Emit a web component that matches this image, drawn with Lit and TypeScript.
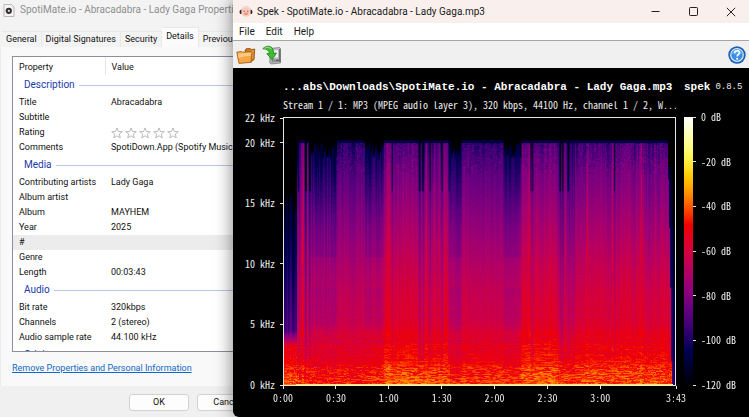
import { LitElement, html, css, svg } from "lit";
import { customElement } from "lit/decorators.js";

/* ---------- shared palette: level 0..1 to RGB ---------- */
function heat(level: number): [number, number, number] {
  const l = Math.max(0, Math.min(1, level));
  const q = Math.PI / 2;
  let r = 0;
  let g = 0;
  let b = 0;
  if (l >= 0.13 && l < 0.73) r = Math.sin(((l - 0.13) / 0.6) * q);
  else if (l >= 0.73) r = 1;
  if (l >= 0.6 && l < 0.91) g = Math.sin(((l - 0.6) / 0.31) * q);
  else if (l >= 0.91) g = 1;
  if (l < 0.6) b = 0.5 * Math.sin((l / 0.6) * Math.PI);
  else if (l >= 0.78) b = (l - 0.78) / 0.22;
  return [r * 255, g * 255, b * 255];
}

function random(seed: number) {
  let s = seed;
  return () => {
    s = (s * 1664525 + 1013904223) >>> 0;
    return s / 4294967296;
  };
}

/* level of a loud passage at a frequency in kHz */
const CURVE: [number, number][] = [
  [0, 0.655], [0.6, 0.64], [1.4, 0.625], [2, 0.585], [3, 0.57], [4, 0.545], [5, 0.515],
  [8, 0.48], [10, 0.445], [12, 0.405], [15, 0.345], [17, 0.305], [19, 0.265], [20, 0.24], [22.05, 0.2],
];
function base(f: number) {
  for (let i = 1; i < CURVE.length; i++) {
    if (f <= CURVE[i][0]) {
      const [f0, v0] = CURVE[i - 1];
      const [f1, v1] = CURVE[i];
      return v0 + ((v1 - v0) * (f - f0)) / (f1 - f0);
    }
  }
  return 0.2;
}

type Part = { to: number; kind: "intro" | "full" | "dim" | "slit" | "end"; gain: number };
const PARTS: Part[] = [
  { to: 13, kind: "intro", gain: 0 },
  { to: 27, kind: "slit", gain: -0.03 },
  { to: 53, kind: "dim", gain: -0.035 },
  { to: 81, kind: "full", gain: -0.03 },
  { to: 100, kind: "dim", gain: -0.015 },
  { to: 135, kind: "full", gain: 0.02 },
  { to: 166, kind: "slit", gain: 0.01 },
  { to: 178, kind: "dim", gain: -0.035 },
  { to: 220, kind: "full", gain: -0.012 },
  { to: 238, kind: "dim", gain: -0.02 },
  { to: 275, kind: "full", gain: 0.02 },
  { to: 294, kind: "slit", gain: 0 },
  { to: 385, kind: "full", gain: 0.008 },
  { to: 392, kind: "end", gain: 0 },
];
/* columns where a beat reaches the full height */
const BEATS = [17, 18, 19, 23, 103, 104, 105, 106, 142, 143, 150, 155, 156, 161, 244, 245, 246, 281, 282, 292, 303, 304, 328, 329, 357, 358];
const GAPS = [14, 21, 22, 25, 26, 108, 135, 136, 138, 139, 146, 158, 165, 247, 249, 276, 277, 279, 284, 285, 331];

@customElement("spek-plot")
export class SpekPlot extends LitElement {
  static styles = css`
    :host { display: block; min-width: 0; min-height: 0; }
    .canvas { display: block; width: 100%; height: 100%; }
  `;

  render() {
    return html`<canvas class="canvas" width="392" height="266" role="img" aria-label="Spectrogram"></canvas>`;
  }

  firstUpdated() {
    const canvas = this.renderRoot.querySelector("canvas") as HTMLCanvasElement;
    const ctx = canvas.getContext("2d");
    if (!ctx) return;
    const w = canvas.width;
    const h = canvas.height;
    const img = ctx.createImageData(w, h);
    const rnd = random(77);
    const rows = Array.from({ length: h }, () => rnd() - 0.5);
    const streak = new Array(h).fill(0);
    let wide = 0;
    for (let x = 0; x < w; x++) {
      const part = PARTS.find((p) => x < p.to) ?? PARTS[PARTS.length - 1];
      if (rnd() < 0.3) wide = rnd() - 0.5;
      const col = (rnd() - 0.5) * 0.7 + wide * 0.5;
      const depth = rnd();
      const closed = rnd() < 0.4;
      const beat = BEATS.includes(x);
      const gap = GAPS.includes(x);
      const stripeEnd = 4 + rnd() * 8;
      for (let y = 0; y < h; y++) {
        const f = (1 - (y + 0.5) / h) * 22.05;
        const fine = rnd() - 0.5;
        if (rnd() < 0.4) streak[y] = rnd() - 0.5;
        let v = base(f) + part.gain;
        v += col * (f > stripeEnd ? 0.075 : f > 4 ? 0.045 : 0.02);
        v += fine * (f > 4 ? 0.03 : 0.03);
        v += rows[y] * (f < 6 ? 0.022 : 0.008);
        if (f < 4) v += streak[y] * (f < 1.6 ? 0.12 : 0.07);
        let top = 20;
        if (part.kind === "intro") {
          const fade = Math.max(0, Math.min(1, (4.5 - f) / 1.3));
          const low = 0.25 + col * 0.1 * (1 - fade) - Math.max(0, f - 4.5) * 0.018 - (x > 8 ? 0.04 : 0) * (1 - fade);
          if (f > 3.2) v = low * (1 - fade) + v * fade;
          top = 16 - depth * 2;
        } else if (part.kind === "dim") {
          const patch = f > 10.5 ? 0.045 : f > 8 ? 0.02 : f > 4 + depth ? 0.04 : 0.005;
          v -= patch;
          if (f > 13) v -= (f - 13) * (0.002 + depth * 0.014);
          top = 18.6 + depth * 1.4;
        } else if (part.kind === "slit") {
          v += col * (f > 4 ? 0.05 : 0.02);
          if (closed && !beat) {
            v -= f > 4 ? 0.03 : 0.01;
            if (f > 16) v -= (f - 16) * 0.04 * depth;
          }
        } else if (part.kind === "full") {
          if (f > 17.5) v += fine * 0.07 - (closed ? 0.012 * (f - 17.5) * (1 + depth) : 0);
        } else {
          const edge = 385 + (f < 17 ? 1 : 0) + (f < 13 ? 1 : 0) + (f < 8 ? 1 : 0) + (f < 2 ? 1 : 0);
          if (x >= edge) v = f > 18 ? 0 : 0.22 - f * 0.006 - (x - edge) * 0.03;
        }
        if (beat) v += f > 10 ? 0.065 : f > 4 ? 0.03 : 0.01;
        if (gap && f > 2) v -= f > 16 ? 0.2 : 0.07;
        if (f > top) v = part.kind === "intro" ? 0 : f > top + 0.2 ? 0 : Math.min(v, 0.1);
        if (y === h - 1 && x < 390) v = x < 12 ? 0.7 : 0.84;
        const [r, g, b] = heat(v);
        const i = (y * w + x) * 4;
        img.data[i] = r;
        img.data[i + 1] = g;
        img.data[i + 2] = b;
        img.data[i + 3] = 255;
      }
    }
    ctx.putImageData(img, 0, 0);
  }
}

@customElement("spek-legend")
export class SpekLegend extends LitElement {
  static styles = css`
    :host { display: block; }
    .canvas { display: block; width: 100%; height: 100%; }
  `;

  render() {
    return html`<canvas class="canvas" width="1" height="267" role="img" aria-label="Level scale"></canvas>`;
  }

  firstUpdated() {
    const canvas = this.renderRoot.querySelector("canvas") as HTMLCanvasElement;
    const ctx = canvas.getContext("2d");
    if (!ctx) return;
    for (let y = 0; y < canvas.height; y++) {
      const [r, g, b] = heat(1 - y / canvas.height);
      ctx.fillStyle = `rgb(${r},${g},${b})`;
      ctx.fillRect(0, y, 1, 1);
    }
  }
}

/* ---------- icons ---------- */
const discIcon = svg`<svg width="12" height="13" viewBox="0 0 12 13" aria-hidden="true">
  <path d="M1 .5h7.500L11 3v9.500H1z" fill="#f4f4f4" stroke="#b9b9b9"/>
  <circle cx="5.800" cy="6.800" r="3.100" fill="#332c2c"/>
  <circle cx="5.800" cy="6.800" r="1.100" fill="#fff"/><circle cx="5.800" cy="6.800" r=".4" fill="#544"/>
</svg>`;
const faceIcon = svg`<svg width="14" height="12" viewBox="0 0 14 12" aria-hidden="true">
  <path d="M1.600 5.500C2.200 2 4.300.6 7 .6s4.800 1.400 5.400 4.900" fill="none" stroke="#dccbc6" stroke-width=".8"/>
  <circle cx="7" cy="6" r="4.800" fill="#fbc9ba"/>
  <path d="M2.400 3.800C.8 4 .4 5.200.6 6.400s1.100 1.700 1.800 1.500zM11.600 3.800c1.600.2 2 1.400 1.800 2.600s-1.100 1.700-1.800 1.500z" fill="#2b2020"/>
  <circle cx="5.200" cy="5.200" r=".6" fill="#7d4236"/><circle cx="8.800" cy="5.200" r=".6" fill="#7d4236"/>
  <ellipse cx="7" cy="7.800" rx="1.900" ry="1.200" fill="#ee8a7a"/>
</svg>`;
const folderIcon = svg`<svg width="20" height="19" viewBox="0 0 20 19" aria-hidden="true">
  <path d="M9 4.500 10 2.800l4.300-.3.9 1L18.700 3l-.6 10.500-3.500 3z" fill="#c97a1d" stroke="#8d4c0c" stroke-width=".8"/>
  <path d="M14.500 4.500 17.800 4l-.6 8.500-2 1z" fill="#e49a45"/>
  <path d="M.8 6.200 5.500 5.500l1.200.7 8.600-.6.7.9-1 9.800L3 17.400z" fill="#f6a548" stroke="#a85d12" stroke-width=".9"/>
  <path d="M2 7.500 15 6.700l-.3 3.300C10 9.500 6 11 2.600 12.200z" fill="#fcc983"/>
</svg>`;
const saveIcon = svg`<svg width="20" height="20" viewBox="0 0 20 20" aria-hidden="true">
  <path d="M8 3.500 17.500 2.500l1 1V18l-9.500 1-1.200-1z" fill="#b9bcbe" stroke="#7b7e80" stroke-width=".8"/>
  <path d="M10 5.500 16 5v7.500L10 13z" fill="#eceeef"/><path d="M9.500 14.500l7.500-.8v3l-7.500.8z" fill="#8e9294"/>
  <path d="M17.800 4v13" stroke="#4a4d4e"/><path d="M14.500 15.500h2" stroke="#4a4d4e"/>
  <path d="M.8 3.800C3.500.5 8.500.3 10.500 3.500c.8 1.400.9 3 .9 4.800l3-.2-4.200 6.700-5.400-6.200 2.700-.1c-.3-2.800-2.500-4.700-6.700-4.700z" fill="#41bd31" stroke="#1b7c15" stroke-width=".8"/>
  <path d="M2.500 3.200C5 1.700 8.200 2 9.400 4.200" fill="none" stroke="#9be887"/>
</svg>`;
const helpIcon = svg`<svg width="18" height="18" viewBox="0 0 18 18" aria-hidden="true">
  <circle cx="9" cy="9" r="8.700" fill="#1c5fb4"/><circle cx="9" cy="9" r="6.300" fill="#3b8ee6" stroke="#d9ebfb" stroke-width="1.200"/>
  <path d="M3.500 7.500a5.700 5.700 0 0 1 11 0c-3 1.500-8 1.500-11 0z" fill="#5ba5ef"/>
  <path d="M6.600 7.200c0-3.400 4.900-3.200 4.900-.4 0 1.900-2.400 1.800-2.400 3.700" fill="none" stroke="#fff" stroke-width="1.600"/>
  <circle cx="9.100" cy="12.700" r="1.050" fill="#fff"/>
</svg>`;
const star = svg`<svg width="12" height="12" viewBox="0 0 12 12" aria-hidden="true">
  <path d="M6 .9 7.400 4.500l3.900.2-3 2.400 1 3.800L6 8.800l-3.300 2.100 1-3.800-3-2.400 3.900-.2z" fill="#fff" stroke="#a9a9a9" stroke-width=".8"/>
</svg>`;

/* ---------- file properties dialog ---------- */
const SECTIONS = [
  { name: "Description", rows: [["Title", "Abracadabra"], ["Subtitle", ""], ["Rating", "*"], ["Comments", "SpotiDown.App (Spotify Music"]] },
  { name: "Media", rows: [["Contributing artists", "Lady Gaga"], ["Album artist", ""], ["Album", "MAYHEM"], ["Year", "2025"], ["#", ""], ["Genre", ""], ["Length", "00:03:43"]] },
  { name: "Audio", rows: [["Bit rate", "320kbps"], ["Channels", "2 (stereo)"], ["Audio sample rate", "44.100 kHz"]] },
  { name: "Origin", rows: [] as string[][] },
];

@customElement("properties-dialog")
export class PropertiesDialog extends LitElement {
  static styles = css`
    :host { display: flex; flex-direction: column; height: 100%; background: #f3f3f3; color: #111;
      font: 9px/15px Roboto, Arial, sans-serif; white-space: nowrap; overflow: hidden; }
    button { font: inherit; color: inherit; }
    .title { display: flex; align-items: center; gap: 5px; height: 20px; padding: 0 3px; color: #8f8f8f;
      font: 10px/20px Roboto, sans-serif; }
    .tabs { display: flex; align-items: flex-end; height: 27px; padding-left: 2px; }
    .tab { height: 16px; padding: 0 4px; border: 1px solid #e8e8e8; border-width: 1px 1px 0 0; background: #f3f3f3; line-height: 15px; }
    .tab.on { height: 20px; background: #fbfbfb; padding-bottom: 3px; }
    .page { flex: 1; min-height: 0; display: flex; flex-direction: column; padding: 9px 0 10px 11px;
      background: #f9f9f9; border-left: 1px solid #ececec; }
    .list { flex: 1; min-height: 0; overflow: hidden; background: #fff; border: 1px solid #8b8f96; border-right: 0; }
    .table { width: 100%; table-layout: fixed; border-collapse: collapse; }
    .name { width: 92px; }
    th, td { padding: 0 0 0 6px; height: 15px; text-align: left; font-weight: 400; }
    .head th { height: 18px; padding-top: 2px; box-sizing: border-box; }
    .head .sep { border-right: 1px solid #e5e5e5; }
    .section { height: 20px; padding-left: 11px; color: #1a3aa8; font: 10px/20px Roboto, sans-serif; }
    .rule { display: flex; align-items: center; gap: 4px; }
    .rule::after { content: ""; flex: 1; height: 1px; background: #b9c8ea; }
    .picked { background: #ececec; }
    .stars { display: flex; gap: 2px; }
    .star { display: block; width: 12px; height: 12px; padding: 0; border: 0; background: none; }
    .link { align-self: flex-start; margin-top: 9px; color: #0f68c8; }
    .foot { display: flex; gap: 8px; padding: 8px 0 6px 129px; background: #f0f0f0; }
    .push { flex: none; width: 60px; height: 17px; padding: 0; border: 1px solid #d2d2d2; border-radius: 3px; background: #fdfdfd; line-height: 15px; }
  `;

  value(v: string) {
    if (v !== "*") return v;
    return html`<div class="stars">
      ${[1, 2, 3, 4, 5].map((n) => html`<button class="star" aria-label="${n} stars">${star}</button>`)}
    </div>`;
  }

  render() {
    return html`
      <header class="title">${discIcon}<span>SpotiMate.io - Abracadabra - Lady Gaga Properties</span></header>
      <div class="tabs" role="tablist">
        ${["General", "Digital Signatures", "Security", "Details", "Previous Versions"].map(
          (t) => html`<button role="tab" class="tab ${t === "Details" ? "on" : ""}" aria-selected=${t === "Details"}>${t}</button>`
        )}
      </div>
      <div class="page">
        <div class="list">
          <table class="table">
            <colgroup><col class="name" /><col /></colgroup>
            <thead><tr class="head"><th class="sep">Property</th><th>Value</th></tr></thead>
            ${SECTIONS.map(
              (s) => html`<tbody>
                <tr><th class="section" colspan="2"><div class="rule">${s.name}</div></th></tr>
                ${s.rows.map(([k, v]) => html`<tr class=${k === "#" ? "picked" : ""}><th scope="row">${k}</th><td>${this.value(v)}</td></tr>`)}
              </tbody>`
            )}
          </table>
        </div>
        <a class="link" href="#remove">Remove Properties and Personal Information</a>
      </div>
      <footer class="foot">
        <button class="push">OK</button><button class="push">Cancel</button>
      </footer>
    `;
  }
}

/* ---------- spectrum analyser window ---------- */
const FREQS: [string, number][] = [["22 kHz", 2.05], ["20 kHz", 5], ["15 kHz", 5], ["10 kHz", 5], ["5 kHz", 5], ["0 kHz", 0]];
const TIMES: [string, number][] = [["0:00", 30], ["0:30", 30], ["1:00", 30], ["1:30", 30], ["2:00", 30], ["2:30", 30], ["3:00", 43], ["3:43", 0]];
const LEVELS: [string, number][] = [["0 dB", 1], ["-20 dB", 1], ["-40 dB", 1], ["-60 dB", 1], ["-80 dB", 1], ["-100 dB", 1], ["-120 dB", 0]];

@customElement("spek-window")
export class SpekWindow extends LitElement {
  static styles = css`
    :host { display: flex; flex-direction: column; overflow: hidden; background: #000; color: #1a1a1a;
      font: 10px/16px Roboto, sans-serif; white-space: nowrap; }
    button { font: inherit; color: inherit; border: 0; padding: 0; background: none; }
    .bar { display: flex; align-items: center; height: 23px; padding-left: 6px; background: #f9f0ee; }
    .caption { flex: 1; min-width: 0; overflow: hidden; padding-left: 4px; }
    .ctl { display: flex; align-items: center; justify-content: center; width: 38px; height: 20px; }
    .ctl.last { margin-right: -1px; }
    .menu { display: flex; gap: 11px; height: 17px; padding-left: 6px; background: #fff; border-bottom: 1px solid #a5a5a5; }
    .tools { display: flex; align-items: center; gap: 6px; height: 26px; padding: 1px 3px 0; background: #f0f0f0; }
    .tool { display: flex; }
    .grow { flex: 1; }
    .view { flex: 1; min-height: 0; display: grid; grid-template: 16px 16px minmax(0, 1fr) 29px / 50px minmax(0, 1fr) 73px;
      row-gap: 2px; padding-top: 11px; color: #ececec; font: 10px/10px "Noto Sans Mono CJK SC", "Liberation Mono", monospace; }
    .file { grid-area: 1 / 2; overflow: hidden; font: bold 11px/16px "Liberation Mono", monospace; color: #fff; }
    .app { grid-area: 1 / 3; display: flex; gap: 5px; align-items: center; padding-left: 8px; }
    .app-name { font: bold 11px/16px "Liberation Mono", monospace; color: #fff; }
    .version { font: 9px/16px "Liberation Mono", monospace; }
    .stream { grid-area: 2 / 2; overflow: hidden; line-height: 16px; }
    .freqs { grid-area: 3 / 1; display: flex; flex-direction: column; padding: 3px 0 1px; }
    .frame { grid-area: 3 / 2; margin-top: 2px; border: 1px solid #e6e6e6; }
    .times { grid-area: 4 / 2; display: flex; margin-top: -2px; }
    .levels { grid-area: 3 / 3; display: flex; margin-top: 2px; padding-left: 8px; }
    .legend { width: 9px; }
    .scale { display: flex; flex-direction: column; padding-bottom: 1px; }
    .step { flex-basis: 0; min-width: 0; min-height: 0; }
    .side { display: flex; align-items: center; height: 0; gap: 5px; }
    .side.right { justify-content: flex-end; }
    .dash { width: 3px; height: 1px; background: #e6e6e6; }
    .under { display: flex; flex-direction: column; align-items: center; width: 0; gap: 4px; }
    .tick { width: 1px; height: 3px; flex: none; background: #e6e6e6; }
  `;

  render() {
    return html`
      <header class="bar">
        ${faceIcon}<span class="caption">Spek - SpotiMate.io - Abracadabra - Lady Gaga.mp3</span>
        <button class="ctl" aria-label="Minimize"><svg width="9" height="9" viewBox="0 0 9 9"><path d="M.5 4.500h8" stroke="#222"/></svg></button>
        <button class="ctl" aria-label="Maximize"><svg width="9" height="9" viewBox="0 0 9 9"><rect x=".5" y=".5" width="8" height="8" rx=".8" fill="none" stroke="#222"/></svg></button>
        <button class="ctl last" aria-label="Close"><svg width="10" height="10" viewBox="0 0 10 10"><path d="M.8.8l8.400 8.400M9.200.8.8 9.200" stroke="#222"/></svg></button>
      </header>
      <nav class="menu"><button>File</button><button>Edit</button><button>Help</button></nav>
      <div class="tools">
        <button class="tool" aria-label="Open">${folderIcon}</button>
        <button class="tool" aria-label="Save">${saveIcon}</button>
        <span class="grow"></span>
        <button class="tool" aria-label="Help">${helpIcon}</button>
      </div>
      <main class="view">
        <div class="file">...abs\\Downloads\\SpotiMate.io - Abracadabra - Lady Gaga.mp3</div>
        <div class="app"><span class="app-name">spek</span><span class="version">0.8.5</span></div>
        <div class="stream">Stream 1 / 1: MP3 (MPEG audio layer 3), 320 kbps, 44100 Hz, channel 1 / 2, W...</div>
        <div class="freqs">
          ${FREQS.map(([t, g]) => html`<div class="step" style="flex-grow:${g}"><div class="side right"><span>${t}</span><i class="dash"></i></div></div>`)}
        </div>
        <spek-plot class="frame"></spek-plot>
        <div class="times">
          ${TIMES.map(([t, g]) => html`<div class="step" style="flex-grow:${g}"><div class="under"><i class="tick"></i><span>${t}</span></div></div>`)}
        </div>
        <div class="levels">
          <spek-legend class="legend"></spek-legend>
          <div class="scale">
            ${LEVELS.map(([t, g]) => html`<div class="step" style="flex-grow:${g}"><div class="side"><i class="dash"></i><span>${t}</span></div></div>`)}
          </div>
        </div>
      </main>
    `;
  }
}

@customElement("app-root")
export class AppRoot extends LitElement {
  static styles = css`
    :host { display: block; position: relative; height: 100vh; overflow: hidden; }
    .back { height: 100%; margin-right: 60%; }
    .front { position: absolute; inset: 0 0 0 233px; border-radius: 0 0 0 6px; box-shadow: 0 0 18px rgba(0, 0, 0, 0.5); }
  `;

  render() {
    return html`
      <properties-dialog class="back"></properties-dialog>
      <spek-window class="front"></spek-window>
    `;
  }
}
